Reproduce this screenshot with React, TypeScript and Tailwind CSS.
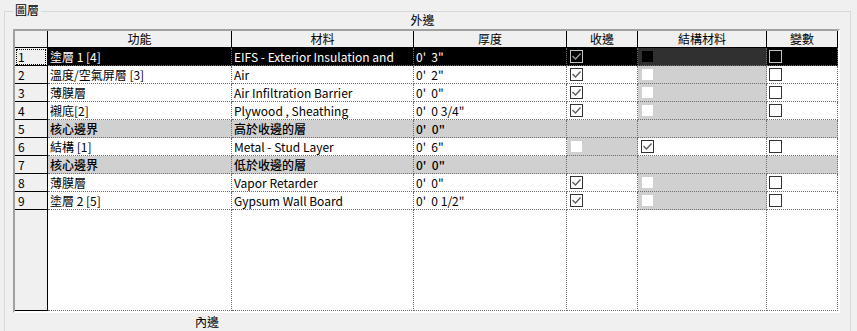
import React from "react";

type Box = "on" | "off" | "dis" | "none";

type Layer = {
  n: number;
  fn: string;
  mat: string;
  th: string;
  wrap: Box;
  struct: Box;
  vr: Box;
  core?: boolean;
};

const layers: Layer[] = [
  { n: 1, fn: "塗層 1 [4]", mat: "EIFS - Exterior Insulation and", th: `0'  3"`, wrap: "on", struct: "dis", vr: "off" },
  { n: 2, fn: "溫度/空氣屏層 [3]", mat: "Air", th: `0'  2"`, wrap: "on", struct: "dis", vr: "off" },
  { n: 3, fn: "薄膜層", mat: "Air Infiltration Barrier", th: `0'  0"`, wrap: "on", struct: "dis", vr: "off" },
  { n: 4, fn: "襯底[2]", mat: "Plywood , Sheathing", th: `0'  0 3/4"`, wrap: "on", struct: "dis", vr: "off" },
  { n: 5, fn: "核心邊界", mat: "高於收邊的層", th: `0'  0"`, wrap: "none", struct: "none", vr: "none", core: true },
  { n: 6, fn: "結構 [1]", mat: "Metal - Stud Layer", th: `0'  6"`, wrap: "dis", struct: "on", vr: "off" },
  { n: 7, fn: "核心邊界", mat: "低於收邊的層", th: `0'  0"`, wrap: "none", struct: "none", vr: "none", core: true },
  { n: 8, fn: "薄膜層", mat: "Vapor Retarder", th: `0'  0"`, wrap: "on", struct: "dis", vr: "off" },
  { n: 9, fn: "塗層 2 [5]", mat: "Gypsum Wall Board", th: `0'  0 1/2"`, wrap: "on", struct: "dis", vr: "off" },
];

const headers = ["功能", "材料", "厚度", "收邊", "結構材料", "變數"];

// revit style checkbox, dark variant used on the selected row
function Check({ state, dark }: { state: Box; dark?: boolean }) {
  if (state === "none") return null;
  if (state === "dis")
    return <div className={dark ? "w-[11px] h-[11px] bg-black ml-[1px]" : "w-[11px] h-[11px] bg-white ml-[1px]"} />;
  return (
    <div
      className={
        dark
          ? "w-[13px] h-[13px] border border-[#c4c4c4] bg-black flex items-center justify-center"
          : "w-[13px] h-[13px] border border-[#333333] bg-white flex items-center justify-center"
      }
    >
      {state === "on" && (
        <svg width="11" height="11" viewBox="0 0 11 11" fill="none">
          <polyline points="1.5,5 4.5,8 9.5,2.5" stroke={dark ? "#9a9a9a" : "#5a5a5a"} strokeWidth="1.3" />
        </svg>
      )}
    </div>
  );
}

const cell = "h-[18px] border-r border-b border-dotted border-[#6d6d6d] px-[2px] flex items-center overflow-hidden whitespace-pre";

function Row({ l }: { l: Layer }) {
  const sel = l.n === 1;
  const base = sel ? "bg-black text-white" : l.core ? "bg-[#d0d0d0] font-medium" : "bg-white";
  const grey = sel ? "bg-[#303030]" : "bg-[#d0d0d0]";
  return (
    <>
      <div className="h-[18px] bg-[#f0f0f0] border-r border-b border-black px-[1px] flex items-center">
        {sel ? (
          <div className="w-full h-[16px] border border-dotted border-black pl-[1px] leading-[14px]">{l.n}</div>
        ) : (
          <span className="pl-[2px]">{l.n}</span>
        )}
      </div>
      <div className={`${cell} ${base}`}>{l.fn}</div>
      <div className={`${cell} ${base}`}>{l.mat}</div>
      <div className={`${cell} ${base}`}>{l.th}</div>
      <div className={`${cell} pl-[3px] ${l.wrap === "dis" ? grey : base}`}>
        <Check state={l.wrap} dark={sel} />
      </div>
      <div className={`${cell} pl-[3px] ${l.struct === "dis" ? grey : base}`}>
        <Check state={l.struct} dark={sel} />
      </div>
      <div className={`${cell} pl-[2px] ${base}`}>
        <Check state={l.vr} dark={sel} />
      </div>
    </>
  );
}

export default function App() {
  return (
    <div
      className="w-[857px] h-[331px] overflow-hidden bg-[#f0f0f0] text-[12px] text-black pt-[11px] pl-[4px]"
      style={{ fontFamily: '"Noto Sans CJK TC", "Noto Sans", sans-serif' }}
    >
      <div className="relative w-[847px] h-[340px] border border-[#d8d8d8]">
        {/* group title sits on the frame line */}
        <span className="absolute -top-[10px] left-[8px] bg-[#f0f0f0] px-[2px] leading-[16px]">圖層</span>

        <div className="w-[835px] text-center leading-[15px]">外邊</div>

        <div className="mt-[2px] ml-[8px] w-[827px] border-t-2 border-l-2 border-t-[#a0a0a0] border-l-[#a0a0a0] border-r-2 border-b-2 border-r-white border-b-white">
          <div className="grid grid-cols-[33px_184px_182px_153px_71px_129px_71px]">
            <div className="h-[17px] bg-[#f0f0f0] border-r border-b border-black" />
            {headers.map((h) => (
              <div key={h} className="h-[17px] bg-[#f0f0f0] border-r border-b border-black flex items-center justify-center leading-none">
                {h}
              </div>
            ))}

            {layers.map((l) => (
              <Row key={l.n} l={l} />
            ))}

            {/* empty filler area below the last layer */}
            <div className="h-[101px] bg-[#f0f0f0] border-r border-b border-black" />
            {headers.map((h) => (
              <div key={h} className="h-[101px] bg-white border-r border-b border-dotted border-[#6d6d6d]" />
            ))}
          </div>
        </div>

        <div className="pl-[190px] leading-[16px] mt-[1px]">內邊</div>
      </div>
    </div>
  );
}
